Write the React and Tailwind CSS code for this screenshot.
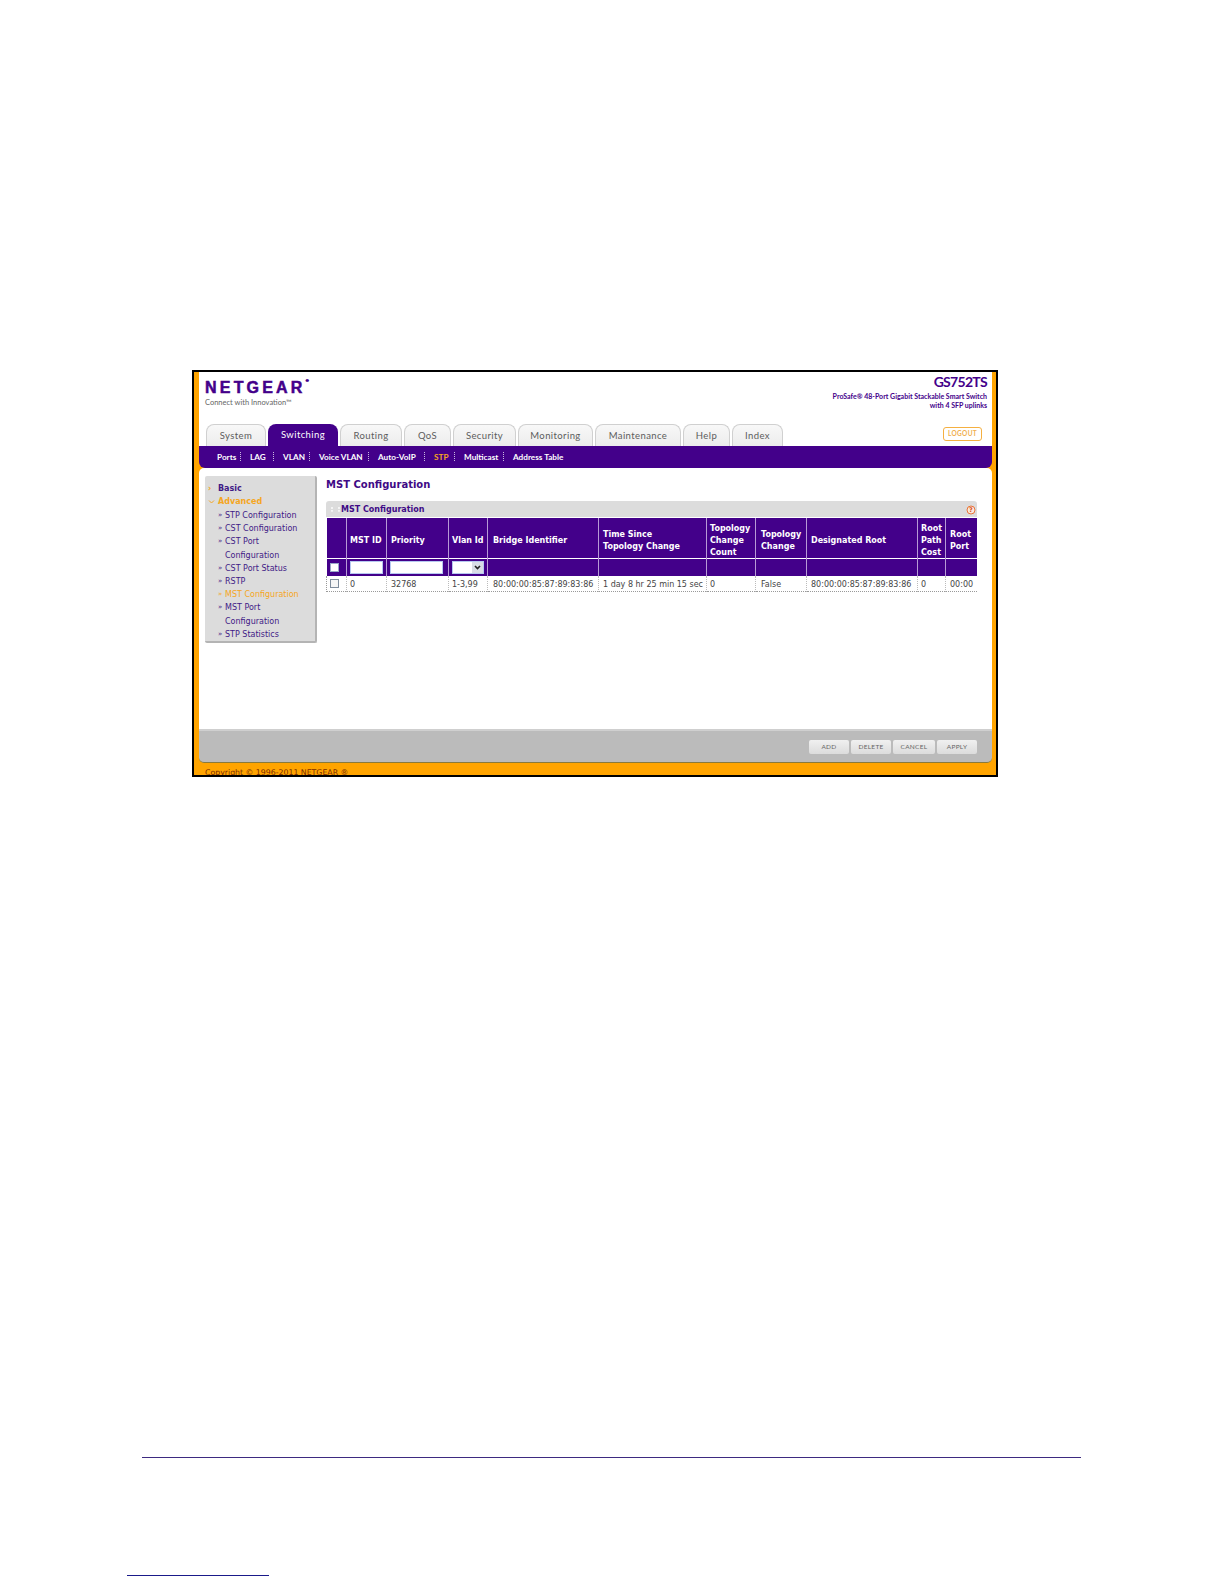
const tabs = [
  { label: "System", width: "w-[60px]" },
  { label: "Switching", width: "w-[70px]", active: true },
  { label: "Routing", width: "w-[62px]" },
  { label: "QoS", width: "w-[47px]" },
  { label: "Security", width: "w-[63px]" },
  { label: "Monitoring", width: "w-[75px]" },
  { label: "Maintenance", width: "w-[86px]" },
  { label: "Help", width: "w-[47px]" },
  { label: "Index", width: "w-[51px]" },
];

const subNav = [
  { label: "Ports", width: "w-[33px]" },
  { label: "LAG", width: "w-[33px]" },
  { label: "VLAN", width: "w-[36px]" },
  { label: "Voice VLAN", width: "w-[59px]" },
  { label: "Auto-VoIP", width: "w-[56px]" },
  { label: "STP", width: "w-[30px]", active: true },
  { label: "Multicast", width: "w-[49px]" },
  { label: "Address Table", width: "w-[60px]", last: true },
];

const sideItems = [
  { lines: ["STP Configuration"] },
  { lines: ["CST Configuration"] },
  { lines: ["CST Port", "Configuration"] },
  { lines: ["CST Port Status"] },
  { lines: ["RSTP"] },
  { lines: ["MST Configuration"], active: true },
  { lines: ["MST Port", "Configuration"] },
  { lines: ["STP Statistics"] },
];

const columns = [
  { head: [""], value: "", width: "w-[20px]", pad: "pl-0" },
  { head: ["MST ID"], value: "0", width: "w-[40px]", pad: "pl-[3px]" },
  { head: ["Priority"], value: "32768", width: "w-[62px]", pad: "pl-[4px]" },
  { head: ["Vlan Id"], value: "1-3,99", width: "w-[39px]", pad: "pl-[3px]" },
  { head: ["Bridge Identifier"], value: "80:00:00:85:87:89:83:86", width: "w-[111px]", pad: "pl-[5px]" },
  { head: ["Time Since", "Topology Change"], value: "1 day 8 hr 25 min 15 sec", width: "w-[108px]", pad: "pl-[4px]" },
  { head: ["Topology", "Change", "Count"], value: "0", width: "w-[49px]", pad: "pl-[3px]" },
  { head: ["Topology", "Change"], value: "False", width: "w-[51px]", pad: "pl-[5px]" },
  { head: ["Designated Root"], value: "80:00:00:85:87:89:83:86", width: "w-[111px]", pad: "pl-[4px]" },
  { head: ["Root", "Path", "Cost"], value: "0", width: "w-[28px]", pad: "pl-[3px]" },
  { head: ["Root", "Port"], value: "00:00", width: "w-[31px]", pad: "pl-[4px]" },
];

const buttons = [
  { label: "ADD", width: "w-[40px]" },
  { label: "DELETE", width: "w-[40px]" },
  { label: "CANCEL", width: "w-[42px]" },
  { label: "APPLY", width: "w-[40px]" },
];

function Tab({ tab }) {
  return (
    <div
      className={
        tab.active
          ? "h-[22px] pt-px flex items-center justify-center rounded-t-[8px] bg-[#43008a] text-white text-[9.5px] tracking-[0.4px]"
          : "h-[22px] pt-px flex items-center justify-center rounded-t-[8px] border border-b-0 border-[#d0d0d0] bg-gradient-to-b from-[#f8f8f8] to-[#ececec] text-[#5c5c5c] text-[9.5px] tracking-[0.4px]"
      }
    >
      {tab.label}
    </div>
  );
}

function Checkbox({ className }) {
  return <div className={`w-[9px] h-[9px] border ${className}`} />;
}

export default function App() {
  return (
    <div className="w-[1224px] h-[1584px] bg-white flex flex-col font-['DejaVu_Sans',sans-serif]">
      <div className="h-[370px]" />
      <div className="ml-[192px] w-[806px] h-[407px] border-2 border-black bg-[#ffa400] pl-[5px] pr-[4px] flex flex-col overflow-hidden">
        {/* header */}
        <div className="h-[74px] bg-white flex flex-col font-['Lato',sans-serif]">
          <div className="h-[52px] flex justify-between pl-[6px] pr-[5px]">
            <div className="pt-[7px]">
              <div className="text-[#43008a] text-[16px] leading-[18px] font-bold tracking-[3.2px] [-webkit-text-stroke:0.5px_#43008a] font-['Liberation_Sans',sans-serif]">
                NETGEAR<span className="align-top text-[4px] leading-none tracking-normal">®</span>
              </div>
              <div className="mt-px text-[#666] text-[7.5px] leading-[10px]">Connect with Innovation™</div>
            </div>
            <div className="text-right text-[#43008a]">
              <div className="pt-[2px] text-[14px] leading-[16px] font-bold tracking-[-0.7px]">GS752TS</div>
              <div className="mt-[2px] text-[7px] leading-[9px] font-bold">ProSafe® 48-Port Gigabit Stackable Smart Switch</div>
              <div className="text-[7px] leading-[9px] font-bold">with 4 SFP uplinks</div>
            </div>
          </div>
          <div className="h-[22px] flex pl-[7px] pr-[10px]">
            <div className="flex gap-[2px]">
              {tabs.map((tab) => (
                <div key={tab.label} className={tab.width}>
                  <Tab tab={tab} />
                </div>
              ))}
            </div>
            <div className="ml-auto mt-[3px] w-[39px] h-[14px] flex items-center justify-center rounded-[3px] border border-[#f5b041] text-[#f0b050] text-[6.5px] font-bold tracking-[0.3px]">
              LOGOUT
            </div>
          </div>
        </div>

        {/* sub navigation */}
        <div className="h-[22px] shrink-0 bg-[#43008a] rounded-bl-[6px] rounded-br-[6px] flex items-center pl-[18px] font-['Lato',sans-serif] text-[8.2px] font-bold text-white">
          {subNav.map((item) => (
            <div key={item.label} className={`${item.width} flex items-center justify-between`}>
              <span className={item.active ? "text-[#f5a623] whitespace-nowrap" : "whitespace-nowrap"}>{item.label}</span>
              {!item.last && <span className="h-[9px] mr-[9px] border-l border-dotted border-[#c9b8e0]" />}
            </div>
          ))}
        </div>

        {/* content */}
        <div className="h-[261px] shrink-0 bg-white rounded-t-[5px] flex pt-[8px] pl-[6px] pr-[15px]">
          <div className="w-[112px] h-[167px] shrink-0 bg-[#dcdcdc] border-r-2 border-b-2 border-[#b4b4b4] rounded-[2px] pt-[6px] pl-[3px] text-[8px] leading-[13.2px] text-[#3f1a86]">
            <div className="flex items-center font-bold">
              <span className="w-[10px] text-[#f5a623] text-[8px]">›</span>
              Basic
            </div>
            <div className="flex items-center font-bold text-[#f5a623]">
              <svg className="w-[10px] h-[6px]" viewBox="0 0 10 6" fill="none" stroke="#f5a623" strokeWidth="1">
                <path d="M1 1.5 L3.5 4 L6 1.5" />
              </svg>
              Advanced
            </div>
            <div className="mt-[0.5px]">
              {sideItems.map((item) =>
                item.lines.map((line, i) => (
                  <div key={item.lines[0] + line + i} className={item.active ? "flex text-[#f5a623]" : "flex"}>
                    <span className="ml-[10px] w-[7px] text-[7px]">{i === 0 ? "»" : ""}</span>
                    {line}
                  </div>
                ))
              )}
            </div>
          </div>

          <div className="ml-[9px] flex-1 min-w-0">
            <div className="h-[25px] pt-px text-[#3f0a86] text-[10px] leading-[16px] font-bold">MST Configuration</div>
            <div className="h-[16px] pt-px bg-[#dcdcdc] rounded-t-[3px] flex items-center pl-[5px] pr-[1px] text-[#3f0a86] text-[8px] font-bold">
              <span className="w-[9px] h-[5px] mr-[1px] border-l-2 border-r-2 border-dotted border-[#f4f4f4]" />
              MST Configuration
              <svg className="ml-auto w-[10px] h-[10px]" viewBox="0 0 10 10">
                <circle cx="5" cy="5" r="4" fill="#fbe9dc" stroke="#e8743a" strokeWidth="1" />
                <text x="5" y="7.4" textAnchor="middle" fontSize="6.5" fontWeight="700" fill="#d9531e">?</text>
              </svg>
            </div>
            <table className="mt-[1px] w-[650px] table-fixed border-collapse text-[8px]">
              <colgroup>
                {columns.map((col, i) => (
                  <col key={i} className={col.width} />
                ))}
              </colgroup>
              <tbody>
                <tr className="h-[40px] bg-[#43008a] text-white font-bold leading-[12px]">
                  {columns.map((col, i) => (
                    <td key={i} className={i === 0 ? "p-0" : `p-0 ${col.pad} border-l border-[#b79ad6] whitespace-nowrap`}>
                      <div className="translate-y-[2.5px]">
                        {col.head.map((line) => (
                          <div key={line}>{line}</div>
                        ))}
                      </div>
                    </td>
                  ))}
                </tr>
                <tr className="h-[18px] bg-[#43008a] border-t border-white">
                  {columns.map((col, i) => (
                    <td key={i} className={i === 0 ? "p-0 pl-[3px]" : "p-0 pl-[3px] border-l border-[#b79ad6]"}>
                      {i === 0 && <Checkbox className="bg-white border-[#9aa8c8]" />}
                      {(i === 1 || i === 2) && (
                        <div className={`${i === 1 ? "w-[33px]" : "w-[53px]"} h-[13px] bg-white border border-[#b6c8f0]`} />
                      )}
                      {i === 3 && (
                        <div className="w-[32px] h-[13px] bg-white border border-[#b6c8f0] flex justify-end">
                          <div className="w-[11px] bg-[#d9dde6] flex items-center justify-center">
                            <svg className="w-[7px] h-[5px]" viewBox="0 0 7 5" fill="none" stroke="#222" strokeWidth="1.6">
                              <path d="M1 1 L3.5 3.6 L6 1" />
                            </svg>
                          </div>
                        </div>
                      )}
                    </td>
                  ))}
                </tr>
                <tr className="h-[15px] bg-white text-[#444] border-b border-dotted border-[#999]">
                  {columns.map((col, i) => (
                    <td
                      key={i}
                      className={
                        i === 0
                          ? "p-0 pl-[3px] border-l border-dotted border-[#999]"
                          : `p-0 pt-[3px] ${col.pad} border-l border-dotted border-[#bbb] whitespace-nowrap`
                      }
                    >
                      {i === 0 ? <Checkbox className="border-[#7f8c9c] bg-[#f6f6f6]" /> : col.value}
                    </td>
                  ))}
                </tr>
              </tbody>
            </table>
          </div>
        </div>

        {/* footer */}
        <div className="h-[34px] shrink-0 pt-px bg-[#bbbbbb] border-t-2 border-[#cfcfcf] border-b border-b-[#8a7a3a] rounded-b-[5px] flex items-center justify-end gap-[2px] pr-[15px] font-['Lato',sans-serif]">
          {buttons.map((btn) => (
            <div
              key={btn.label}
              className={`${btn.width} h-[14px] flex items-center justify-center bg-gradient-to-b from-[#f0f0f0] to-[#dcdcdc] rounded-[2px] text-[#666] text-[6.5px] tracking-[0.3px]`}
            >
              {btn.label}
            </div>
          ))}
        </div>
        <div className="h-[12px] shrink-0 pl-[6px] pt-[5px] text-[#7a2a00] text-[7.8px] leading-[10px] whitespace-nowrap">
          Copyright © 1996-2011 NETGEAR ®
        </div>
      </div>

      {/* page footer rules */}
      <div className="mt-[680px] ml-[142px] w-[939px] h-px bg-[#3d2a80]" />
      <div className="mt-[117px] ml-[127px] w-[142px] h-[1px] bg-[#1a1a8a]" />
    </div>
  );
}
